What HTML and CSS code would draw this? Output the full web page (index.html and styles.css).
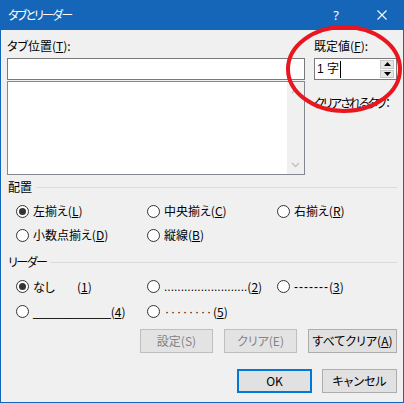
FILE: index.html
```html
<!DOCTYPE html>
<html lang="ja">
<head>
<meta charset="utf-8">
<link rel="stylesheet" href="styles.css">
</head>
<body>
<div class="dialog">
  <div class="titlebar">
    <span class="title">タブとリーダー</span>
    <div class="controls">
      <span class="ctl help">?</span>
      <span class="ctl close">
        <svg width="10" height="10" viewBox="0 0 10 10"><path d="M0.5 0.5L9.5 9.5M9.5 0.5L0.5 9.5" stroke="#fff" stroke-width="1.1" fill="none"/></svg>
      </span>
    </div>
  </div>
  <div class="content">
    <div class="top">
      <div class="col-left">
        <div class="label">タブ位置(<u>T</u>):</div>
        <div class="tabinput"></div>
        <div class="listbox">
          <div class="listarea"></div>
          <div class="scrollbar">
            <svg width="9" height="6" viewBox="0 0 9 6"><path d="M1 5L4.5 1.5L8 5" stroke="#c0c0c0" stroke-width="1.3" fill="none"/></svg>
            <svg width="9" height="6" viewBox="0 0 9 6"><path d="M1 1L4.5 4.5L8 1" stroke="#c0c0c0" stroke-width="1.3" fill="none"/></svg>
          </div>
        </div>
      </div>
      <div class="col-right">
        <div class="label">既定値(<u>F</u>):</div>
        <div class="spin">
          <span class="spinval">1 字</span><span class="caret"></span>
          <div class="spinbtns">
            <div class="sb"><svg width="7" height="4" viewBox="0 0 7 4"><path d="M0 4L3.5 0L7 4Z" fill="#000"/></svg></div>
            <div class="sb"><svg width="7" height="4" viewBox="0 0 7 4"><path d="M0 0L3.5 4L7 0Z" fill="#000"/></svg></div>
          </div>
        </div>
        <div class="label cleared">クリアされるタブ：</div>
      </div>
    </div>

    <div class="group"><span class="gtitle">配置</span><span class="gline"></span></div>
    <div class="options">
      <label class="opt"><span class="radio on"></span><span>左揃え(<u>L</u>)</span></label>
      <label class="opt"><span class="radio"></span><span>中央揃え(<u>C</u>)</span></label>
      <label class="opt"><span class="radio"></span><span>右揃え(<u>R</u>)</span></label>
      <label class="opt"><span class="radio"></span><span>小数点揃え(<u>D</u>)</span></label>
      <label class="opt"><span class="radio"></span><span>縦線(<u>B</u>)</span></label>
    </div>

    <div class="group leader-group"><span class="gtitle kana">リーダー</span><span class="gline"></span></div>
    <div class="options leaders">
      <label class="opt"><span class="radio on"></span><span class="none">なし</span><span>(<u>1</u>)</span></label>
      <label class="opt"><span class="radio"></span><span class="ldr dots">.........................</span><span>(<u>2</u>)</span></label>
      <label class="opt"><span class="radio"></span><span class="ldr dash">-------</span><span>(<u>3</u>)</span></label>
      <label class="opt"><span class="radio"></span><span class="ldr line">____________</span><span>(<u>4</u>)</span></label>
      <label class="opt"><span class="radio"></span><span class="ldr mid">········</span><span>(<u>5</u>)</span></label>
    </div>

    <div class="btnrow">
      <button class="btn w73" disabled>設定(S)</button>
      <button class="btn w73" disabled>クリア(E)</button>
      <button class="btn w89">すべてクリア(<u>A</u>)</button>
    </div>
    <div class="btnrow okrow">
      <button class="btn w75 default">OK</button>
      <button class="btn w75">キャンセル</button>
    </div>
  </div>
  <svg class="annot" width="124" height="94" viewBox="0 0 124 94"><ellipse cx="60" cy="46" rx="56" ry="42" fill="none" stroke="#e8161e" stroke-width="4"/></svg>
</div>
</body>
</html>
```
FILE: styles.css
```css
* { box-sizing: border-box; }
html, body { margin: 0; padding: 0; }
body {
  width: 404px;
  height: 403px;
  background: #f0f0f0;
  font-family: "Noto Sans CJK JP", "Noto Sans", sans-serif;
  font-size: 12px;
  line-height: 16px;
  color: #000;
  font-feature-settings: "palt";
}
u { text-decoration: underline; text-underline-offset: 1px; }

.dialog {
  position: relative;
  width: 404px;
  height: 403px;
  border: 1px solid #1565b8;
  background: #f0f0f0;
  overflow: hidden;
}

.titlebar {
  margin: -1px -1px 0 -1px;
  height: 30px;
  background: #1565b8;
  color: #fff;
  display: flex;
  align-items: center;
  justify-content: space-between;
}
.title { padding-left: 8px; font-size: 12px; letter-spacing: -1.8px; }
.controls { display: flex; height: 30px; }
.ctl {
  width: 46px;
  height: 30px;
  display: flex;
  align-items: center;
  justify-content: center;
}
.help { font-family: "Noto Sans", sans-serif; font-size: 13px; }
.close { width: 45px; }

.content {
  padding: 8px 6px 0 6px;
}

.top { display: flex; gap: 9px; }
.col-left { width: 298px; }
.col-right { width: 83px; }
.label { height: 16px; margin-bottom: 4px; white-space: nowrap; }

.tabinput {
  height: 22px;
  background: #fff;
  border: 1px solid #7a7a7a;
  margin-bottom: 1px;
}
.listbox {
  height: 94px;
  background: #fff;
  border: 1px solid #828790;
  display: flex;
}
.listarea { flex: 1; }
.scrollbar {
  width: 17px;
  background: #f0f0f0;
  display: flex;
  flex-direction: column;
  justify-content: space-between;
  align-items: center;
  padding: 6px 0 6px;
}

.spin {
  height: 22px;
  background: #fff;
  border: 1px solid #7a7a7a;
  display: flex;
  align-items: center;
  padding-left: 2px;
}
.spinval { font-family: "Liberation Sans", "Noto Sans CJK JP", sans-serif; font-size: 12px; line-height: 16px; }
.caret { width: 1px; height: 17px; background: #000; margin-left: 1px; }
.spinbtns {
  margin-left: auto;
  width: 15px;
  height: 20px;
  display: flex;
  flex-direction: column;
  gap: 1px;
  padding: 1px 1px 1px 0;
  margin-right: 1px;
}
.sb {
  flex: 1;
  background: #e6e6e6;
  border: 1px solid #c8c8c8;
  display: flex;
  align-items: center;
  justify-content: center;
}
.cleared { margin-top: 15px; letter-spacing: -1.9px; }

.group {
  display: flex;
  align-items: center;
  height: 16px;
  margin-top: 4px;
  padding-left: 1px;
}
.gline { flex: 1; height: 1px; background: #dcdcdc; margin-left: 4px; }
.kana { letter-spacing: -1.5px; }
.leader-group { margin-top: 7px; }

.options {
  display: grid;
  grid-template-columns: 131px 130px auto;
  grid-auto-rows: 24px;
  margin-top: 4px;
  padding-left: 9px;
}
.leaders { grid-auto-rows: 25px; }
.opt { display: flex; align-items: center; white-space: nowrap; }
.radio {
  width: 13px;
  height: 13px;
  border: 1px solid #333;
  border-radius: 50%;
  background: #fff;
  margin-right: 4px;
  display: flex;
  align-items: center;
  justify-content: center;
  flex: none;
}
.radio.on::after {
  content: "";
  width: 7px;
  height: 7px;
  border-radius: 50%;
  background: #333;
}
.none { display: inline-block; width: 44px; }
.ldr { font-family: "Liberation Sans", sans-serif; }
.dots { letter-spacing: 0; }
.dash { letter-spacing: 1px; }
.line { letter-spacing: -0.2px; }
.mid { letter-spacing: 2px; padding-left: 1px; }

.btnrow {
  display: flex;
  justify-content: flex-end;
  gap: 11px;
  margin-top: 5px;
}
.okrow { margin-top: 16px; gap: 10px; }
.btn {
  height: 24px;
  font: inherit;
  font-size: 12px;
  background: #e1e1e1;
  border: 1px solid #adadad;
  color: #000;
  padding: 0;
  white-space: nowrap;
}
.btn:disabled { color: #838383; border-color: #bfbfbf; background: #e3e3e3; }
.btn.default { border: 2px solid #0078d7; }
.w73 { width: 73px; }
.w75 { width: 75px; }
.w89 { width: 89px; }

.annot {
  position: absolute;
  left: 283px;
  top: 22px;
  pointer-events: none;
}
```
